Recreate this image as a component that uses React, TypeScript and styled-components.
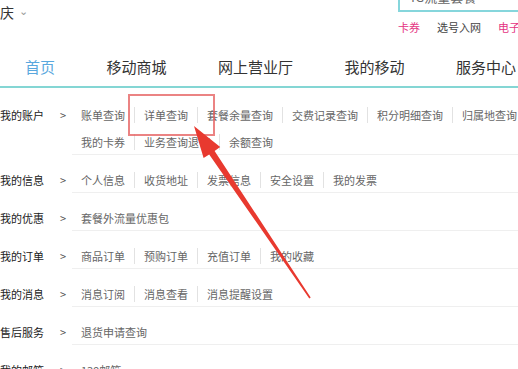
import React from "react"
import styled, { createGlobalStyle } from "styled-components"

const GlobalStyle = createGlobalStyle`
  html, body {
    margin: 0;
    padding: 0;
    background: #fff;
    overflow: hidden;
  }
  body {
    font-family: "Noto Sans CJK SC", "Microsoft YaHei", sans-serif;
  }
`

const navItems = ["首页", "移动商城", "网上营业厅", "我的移动", "服务中心"]

const menu: { label: string; lines: string[][] }[] = [
  {
    label: "我的账户",
    lines: [
      ["账单查询", "详单查询", "套餐余量查询", "交费记录查询", "积分明细查询", "归属地查询"],
      ["我的卡券", "业务查询退订", "余额查询"],
    ],
  },
  { label: "我的信息", lines: [["个人信息", "收货地址", "发票信息", "安全设置", "我的发票"]] },
  { label: "我的优惠", lines: [["套餐外流量优惠包"]] },
  { label: "我的订单", lines: [["商品订单", "预购订单", "充值订单", "我的收藏"]] },
  { label: "我的消息", lines: [["消息订阅", "消息查看", "消息提醒设置"]] },
  { label: "售后服务", lines: [["退货申请查询"]] },
  { label: "我的邮箱", lines: [["139邮箱"]] },
]

export default function App() {
  return (
    <Page>
      <GlobalStyle />
      <TopBar>
        <City>
          庆 <Caret>⌄</Caret>
        </City>
        <SearchArea>
          <SearchBox>4G流量套餐</SearchBox>
          <QuickLinks>
            <QuickLink $hot>卡券</QuickLink>
            <QuickLink>选号入网</QuickLink>
            <QuickLink $hot>电子</QuickLink>
          </QuickLinks>
        </SearchArea>
      </TopBar>
      <Nav>
        {navItems.map((n, i) => (
          <NavItem key={n} $active={i === 0}>
            {n}
          </NavItem>
        ))}
      </Nav>
      <Menu>
        {menu.map((row) => (
          <Row key={row.label}>
            <Label>{row.label}</Label>
            <Chevron>&gt;</Chevron>
            <Items>
              {row.lines.map((line, i) => (
                <Line key={i}>
                  {line.map((it) => (
                    <Item key={it}>{it}</Item>
                  ))}
                </Line>
              ))}
            </Items>
          </Row>
        ))}
      </Menu>
      <Highlight />
      <Arrow viewBox="0 0 518 369" width="518" height="369">
        <polygon
          points="194,126 220.2,146.9 214.6,151 310.7,297.6 309.3,298.4 209.2,154.4 203.6,158.1"
          fill="#e8392f"
        />
      </Arrow>
    </Page>
  )
}

const Page = styled.div`
  position: relative;
  width: 518px;
  height: 369px;
  overflow: hidden;
`

const TopBar = styled.div`
  display: grid;
  grid-template-columns: 398px 140px;
  height: 40px;
`

const City = styled.div`
  font-size: 14px;
  line-height: 20px;
  color: #333;
`

const Caret = styled.span`
  font-size: 11px;
  color: #999;
  margin-left: 2px;
  vertical-align: 3px;
`

const SearchArea = styled.div`
  display: flex;
  flex-direction: column;
`

const SearchBox = styled.div`
  box-sizing: border-box;
  height: 28px;
  margin-top: -16px;
  border: 2px solid #86d6dc;
  padding: 0 8px;
  font-size: 13px;
  line-height: 22px;
  color: #666;
`

const QuickLinks = styled.div`
  display: flex;
  gap: 17px;
  margin-top: 7px;
`

const QuickLink = styled.span<{ $hot?: boolean }>`
  font-size: 11px;
  line-height: 16px;
  color: ${(p) => (p.$hot ? "#e4337f" : "#444")};
  white-space: nowrap;
`

const Nav = styled.div`
  box-sizing: border-box;
  display: flex;
  gap: 51.5px;
  align-items: center;
  height: 48px;
  padding: 8px 0 0 25px;
  border-bottom: 2px solid #84d6d4;
`

const NavItem = styled.span<{ $active?: boolean }>`
  font-size: 15px;
  line-height: 20px;
  color: ${(p) => (p.$active ? "#5aa8de" : "#333")};
  white-space: nowrap;
`

const Menu = styled.div`
  padding-top: 2px;
`

const Row = styled.div`
  display: grid;
  grid-template-columns: 60px 12px 1fr;
  font-size: 11px;
  line-height: 16px;
`

const Label = styled.div`
  padding-top: 17px;
  color: #222;
  white-space: nowrap;
`

const Chevron = styled.div`
  padding-top: 17px;
  color: #555;
`

const Items = styled.div`
  display: flex;
  flex-direction: column;
  gap: 11px;
  padding: 17px 0 4px;
  border-bottom: 1px solid #efefef;
  overflow: hidden;
`

const Line = styled.div`
  display: flex;
`

const Item = styled.span`
  padding: 0 9px;
  color: #666;
  white-space: nowrap;
  & + & {
    border-left: 1px solid #e2e2e2;
  }
`

const Highlight = styled.div`
  position: absolute;
  left: 128px;
  top: 94px;
  width: 87px;
  height: 42px;
  box-sizing: border-box;
  border: 2px solid rgba(228, 90, 90, 0.75);
`

const Arrow = styled.svg`
  position: absolute;
  left: 0;
  top: 0;
  pointer-events: none;
`
